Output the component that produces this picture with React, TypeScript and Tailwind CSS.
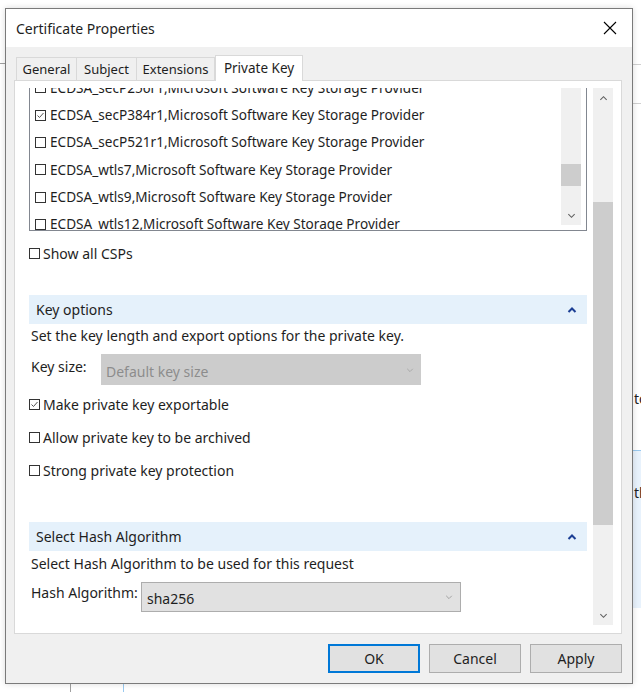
import React from 'react';

const font = "font-['Noto_Sans',sans-serif]";

const items = [
  { label: 'ECDSA_secP256r1,Microsoft Software Key Storage Provider', checked: false },
  { label: 'ECDSA_secP384r1,Microsoft Software Key Storage Provider', checked: true },
  { label: 'ECDSA_secP521r1,Microsoft Software Key Storage Provider', checked: false },
  { label: 'ECDSA_wtls7,Microsoft Software Key Storage Provider', checked: false },
  { label: 'ECDSA_wtls9,Microsoft Software Key Storage Provider', checked: false },
  { label: 'ECDSA_wtls12,Microsoft Software Key Storage Provider', checked: false },
];

const Check = ({ checked }: { checked?: boolean }) => (
  <span className="w-[11px] h-[11px] border border-[#333333] bg-white flex items-center justify-center shrink-0">
    {checked && (
      <svg width="9" height="9" viewBox="0 0 9 9">
        <polyline points="1.5,4.5 3.5,6.5 7.5,2" fill="none" stroke="#555" strokeWidth="1" />
      </svg>
    )}
  </span>
);

const Chevron = ({ up, color = '#606060', size = 9 }: { up?: boolean; color?: string; size?: number }) => (
  <svg width={size} height={size} viewBox="0 0 10 10">
    <polyline points={up ? '1.5,6.5 5,3 8.5,6.5' : '1.5,3.5 5,7 8.5,3.5'} fill="none" stroke={color} strokeWidth="1.2" />
  </svg>
);

const SectionHeader = ({ title }: { title: string }) => (
  <div className="h-[29px] bg-[#e5f1fb] flex items-center justify-between pl-[7px] pr-[10px] shrink-0">
    <span className="text-[14px] text-[#1e1e1e]">{title}</span>
    <svg width="10" height="8" viewBox="0 0 10 8">
      <polyline points="1.5,6 5,2.5 8.5,6" fill="none" stroke="#1c3f94" strokeWidth="2" />
    </svg>
  </div>
);

const CheckRow = ({ label, checked }: { label: string; checked?: boolean }) => (
  <div className="h-[33px] flex items-center gap-[3px] shrink-0">
    <Check checked={checked} />
    <span className="text-[14px]">{label}</span>
  </div>
);

const Button = ({ label, primary }: { label: string; primary?: boolean }) => (
  <button
    className={`w-[92px] h-[29px] bg-[#e1e1e1] text-[14px] text-[#1e1e1e] border ${
      primary ? 'border-[#0078d7] shadow-[inset_0_0_0_1px_#0078d7]' : 'border-[#adadad]'
    }`}
  >
    {label}
  </button>
);

export default function App() {
  return (
    <div className={`relative w-[641px] h-[692px] bg-white overflow-hidden text-[#1e1e1e] ${font}`}>
      {/* windows behind the dialog */}
      <div className="absolute left-0 top-[63px] w-[6px] h-px bg-[#a0a0a0]" />
      <div className="absolute left-[633px] top-[64px] w-[8px] h-px bg-[#d0d0d0]" />
      <div className="absolute left-[633px] top-[103px] w-[8px] h-px bg-[#d0d0d0]" />
      <div className="absolute left-[634px] top-[392px] text-[14px] leading-none">to</div>
      <div className="absolute left-[633px] top-[450px] w-[8px] h-[158px] bg-[#e8f2fc] border-t border-[#99c9ef]">
        <div className="pt-[35px] pl-[1px] text-[14px] leading-none">th</div>
      </div>
      <div className="absolute left-[70px] top-[683px] w-px h-[9px] bg-[#a0a0a0]" />
      <div className="absolute left-[123px] top-[683px] w-px h-[9px] bg-[#99c9ef]" />

      {/* dialog */}
      <div className="absolute left-[5px] top-[8px] w-[628px] h-[676px] border border-[#7a7a7a] bg-[#f0f0f0] flex flex-col shadow-[0_0_6px_rgba(0,0,0,0.15)]">
        <div className="h-[38px] bg-white flex items-center justify-between pl-[10px] pr-[15px] shrink-0">
          <span className="text-[14px]">Certificate Properties</span>
          <svg width="14" height="14" viewBox="0 0 14 14">
            <path d="M1 1L13 13M13 1L1 13" stroke="#000" strokeWidth="1.1" />
          </svg>
        </div>

        <div className="pl-[8px] pr-[10px] pt-[8px] flex flex-col">
          {/* tabs */}
          <div className="flex items-end h-[25px] pl-[2px] relative z-10">
            {['General', 'Subject', 'Extensions'].map((t, i) => (
              <div
                key={t}
                className={`h-[23px] border border-[#d9d9d9] border-b-0 bg-[#f0f0f0] text-[13px] flex items-center justify-center pt-[1px] ${
                  i === 0 ? 'w-[61px]' : i === 1 ? 'w-[60px] border-l-0' : 'w-[78px] border-l-0'
                }`}
              >
                {t}
              </div>
            ))}
            <div className="h-[26px] w-[88px] border border-[#d9d9d9] border-b-0 bg-white text-[13.5px] flex items-start justify-center pt-[2px] -mb-px">
              Private Key
            </div>
          </div>

          {/* panel */}
          <div className="h-[554px] bg-white border border-[#d9d9d9] flex pl-[14px] pr-[8px] pt-[7px] pb-[8px]">
            <div className="w-[558px] h-[537px] overflow-hidden flex flex-col">
              {/* list box */}
              <div className="h-[143px] border-x border-b border-[#828790] flex shrink-0">
                <div className="flex-1 overflow-hidden">
                  <div className="-mt-[14px] pl-[5px]">
                    {items.map((it) => (
                      <div key={it.label} className="h-[27.4px] flex items-center gap-[4px] text-[13.6px] whitespace-nowrap">
                        <Check checked={it.checked} />
                        <span>{it.label}</span>
                      </div>
                    ))}
                  </div>
                </div>
                <div className="w-[20px] h-[137px] bg-[#f0f0f0] flex flex-col items-center mr-[5px]">
                  <div className="h-[76px]" />
                  <div className="w-[20px] h-[22px] bg-[#cdcdcd]" />
                  <div className="flex-1" />
                  <div className="h-[20px] flex items-center justify-center">
                    <Chevron />
                  </div>
                </div>
              </div>

              <div className="h-[44px] flex items-center gap-[3px] pt-[1px] shrink-0">
                <Check />
                <span className="text-[14px]">Show all CSPs</span>
              </div>

              <div className="h-[20px] shrink-0" />
              <SectionHeader title="Key options" />
              <div className="h-[22px] flex items-center pl-[2px] text-[14px] shrink-0">
                Set the key length and export options for the private key.
              </div>
              <div className="h-[39px] pt-[8px] flex items-start shrink-0">
                <span className="w-[72px] h-[24px] flex items-center pl-[2px] text-[14px]">Key size:</span>
                <div className="w-[320px] h-[31px] bg-[#cccccc] flex items-center justify-between pl-[5px] pr-[7px]">
                  <span className="text-[14px] text-[#8c8c8c] pt-[3px]">Default key size</span>
                  <Chevron color="#a8a8a8" size={8} />
                </div>
              </div>
              <div className="h-[3px] shrink-0" />
              <CheckRow label="Make private key exportable" checked />
              <CheckRow label="Allow private key to be archived" />
              <CheckRow label="Strong private key protection" />

              <div className="h-[35px] shrink-0" />
              <SectionHeader title="Select Hash Algorithm" />
              <div className="h-[24px] flex items-center pl-[2px] text-[14px] shrink-0">
                Select Hash Algorithm to be used for this request
              </div>
              <div className="h-[37px] pt-[7px] flex items-start shrink-0">
                <span className="w-[112px] h-[20px] flex items-center pl-[2px] text-[14px]">Hash Algorithm:</span>
                <div className="w-[320px] h-[30px] bg-[#e1e1e1] border border-[#adadad] flex items-center justify-between pl-[5px] pr-[7px]">
                  <span className="text-[14px] pt-[2px]">sha256</span>
                  <Chevron color="#a0a0a0" size={8} />
                </div>
              </div>
            </div>

            {/* outer scrollbar */}
            <div className="ml-[6px] w-[20px] h-[537px] bg-[#f0f0f0] flex flex-col">
              <div className="h-[20px] flex items-center justify-center">
                <Chevron up />
              </div>
              <div className="h-[94px]" />
              <div className="h-[323px] bg-[#cdcdcd]" />
              <div className="flex-1" />
              <div className="h-[20px] flex items-center justify-center">
                <Chevron />
              </div>
            </div>
          </div>

          {/* buttons */}
          <div className="flex justify-end gap-[9px] pt-[10px]">
            <Button label="OK" primary />
            <Button label="Cancel" />
            <Button label="Apply" />
          </div>
        </div>
      </div>
    </div>
  );
}
